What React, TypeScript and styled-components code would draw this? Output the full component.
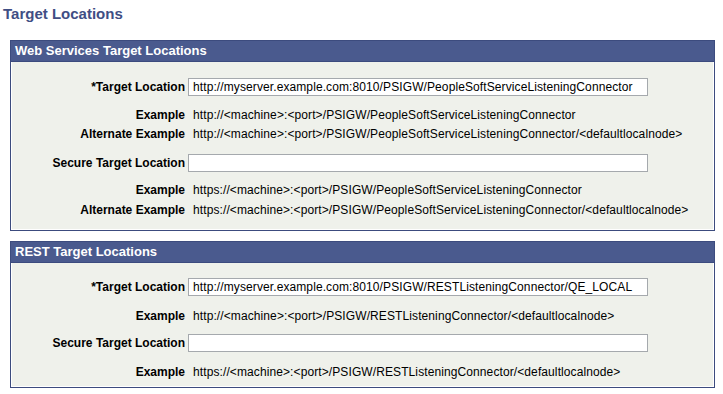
import React from 'react'
import styled, { createGlobalStyle } from 'styled-components'

const GlobalStyle = createGlobalStyle`
  body {
    margin: 0;
    background: #ffffff;
    font-family: "Liberation Sans", Arial, sans-serif;
  }
`

type Field =
  | { kind: 'input'; label: string; value: string; mt: number }
  | { kind: 'text'; label: string; value: string; mt: number }

type Section = {
  title: string
  padTop: number
  padBottom: number
  fields: Field[]
}

const sections: Section[] = [
  {
    title: 'Web Services Target Locations',
    padTop: 16,
    padBottom: 10,
    fields: [
      { kind: 'input', label: '*Target Location', value: 'http://myserver.example.com:8010/PSIGW/PeopleSoftServiceListeningConnector', mt: 0 },
      { kind: 'text', label: 'Example', value: 'http://<machine>:<port>/PSIGW/PeopleSoftServiceListeningConnector', mt: 9 },
      { kind: 'text', label: 'Alternate Example', value: 'http://<machine>:<port>/PSIGW/PeopleSoftServiceListeningConnector/<defaultlocalnode>', mt: 0 },
      { kind: 'input', label: 'Secure Target Location', value: '', mt: 11 },
      { kind: 'text', label: 'Example', value: 'https://<machine>:<port>/PSIGW/PeopleSoftServiceListeningConnector', mt: 8 },
      { kind: 'text', label: 'Alternate Example', value: 'https://<machine>:<port>/PSIGW/PeopleSoftServiceListeningConnector/<defaultlocalnode>', mt: 1 },
    ],
  },
  {
    title: 'REST Target Locations',
    padTop: 15,
    padBottom: 5,
    fields: [
      { kind: 'input', label: '*Target Location', value: 'http://myserver.example.com:8010/PSIGW/RESTListeningConnector/QE_LOCAL', mt: 0 },
      { kind: 'text', label: 'Example', value: 'http://<machine>:<port>/PSIGW/RESTListeningConnector/<defaultlocalnode>', mt: 10 },
      { kind: 'input', label: 'Secure Target Location', value: '', mt: 9 },
      { kind: 'text', label: 'Example', value: 'https://<machine>:<port>/PSIGW/RESTListeningConnector/<defaultlocalnode>', mt: 10 },
    ],
  },
]

const App = () => {
  return (
    <Page>
      <GlobalStyle />
      <Title>Target Locations</Title>
      {sections.map((s) => (
        <Panel key={s.title}>
          <Header>{s.title}</Header>
          <Body $padTop={s.padTop} $padBottom={s.padBottom}>
            {s.fields.map((f, i) => (
              <Row key={i} $mt={f.mt} $tall={f.kind === 'text'}>
                <Label>{f.label}</Label>
                {f.kind === 'input' ? (
                  <Input type="text" defaultValue={f.value} readOnly />
                ) : (
                  <Value>{f.value}</Value>
                )}
              </Row>
            ))}
          </Body>
        </Panel>
      ))}
    </Page>
  )
}

const Page = styled.div`
  display: flex;
  flex-direction: column;
  padding-top: 5px;
`
const Title = styled.div`
  font-size: 15px;
  font-weight: bold;
  color: #3f4e84;
  padding-left: 3px;
  height: 17px;
  line-height: 17px;
  margin-bottom: 18px;
`
const Panel = styled.div`
  margin-left: 10px;
  width: 705px;
  box-sizing: border-box;
  border: 1px solid #3c4b7e;
  background: #ffffff;
  margin-bottom: 10px;
`
const Header = styled.div`
  height: 20px;
  line-height: 20px;
  background: #4a5a8e;
  color: #ffffff;
  font-size: 13px;
  font-weight: bold;
  padding-left: 4px;
  border-bottom: 1px solid #3c4b7e;
`
const Body = styled.div<{ $padTop: number; $padBottom: number }>`
  display: flex;
  flex-direction: column;
  background: #eff1eb;
  margin: 0 1px 1px 1px;
  padding-top: ${(p) => p.$padTop}px;
  padding-bottom: ${(p) => p.$padBottom}px;
`
const Row = styled.div<{ $mt: number; $tall: boolean }>`
  display: flex;
  align-items: center;
  gap: 3px;
  margin-top: ${(p) => p.$mt}px;
  height: ${(p) => (p.$tall ? 19 : 18)}px;
`
const Label = styled.div`
  width: 173px;
  text-align: right;
  font-size: 12px;
  font-weight: bold;
  color: #000000;
  white-space: nowrap;
`
const Input = styled.input`
  box-sizing: border-box;
  width: 460px;
  height: 18px;
  padding: 0 4px;
  border: 1px solid #a5a9ad;
  background: #ffffff;
  font-family: "Liberation Sans", Arial, sans-serif;
  font-size: 12px;
  letter-spacing: 0.1px;
  color: #000000;
  outline: none;
`
const Value = styled.div`
  padding-left: 5px;
  font-size: 12px;
  letter-spacing: 0.1px;
  color: #000000;
  white-space: nowrap;
`

export default App
